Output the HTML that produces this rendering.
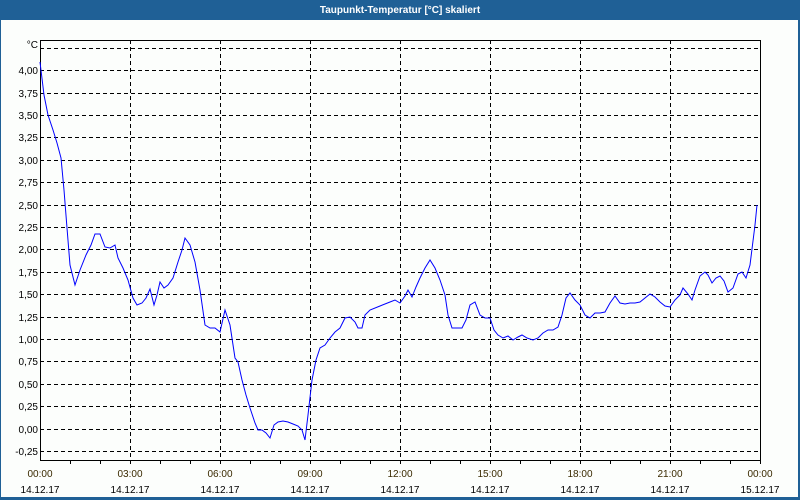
<!DOCTYPE html>
<html><head><meta charset="utf-8"><style>
html,body{margin:0;padding:0;width:800px;height:500px;overflow:hidden;background:#fcfefc}
</style></head><body>
<svg width="800" height="500" xmlns="http://www.w3.org/2000/svg" font-family="Liberation Sans, sans-serif" font-size="10">
<rect x="0" y="0" width="800" height="500" fill="#1f6096"/>
<rect x="1" y="20" width="797" height="477" fill="#fcfefc"/>
<text x="400" y="13" text-anchor="middle" fill="#fff" font-weight="bold" font-size="10">Taupunkt-Temperatur [°C] skaliert</text>
<g stroke="#000" stroke-width="1" stroke-dasharray="4,3" fill="none">
<path d="M40 48.5H760M40 70.5H760M40 93.5H760M40 115.5H760M40 137.5H760M40 160.5H760M40 182.5H760M40 205.5H760M40 227.5H760M40 249.5H760M40 272.5H760M40 294.5H760M40 317.5H760M40 339.5H760M40 361.5H760M40 384.5H760M40 406.5H760M40 429.5H760M40 451.5H760"/>
<path d="M130.5 40V460M220.5 40V460M310.5 40V460M400.5 40V460M490.5 40V460M580.5 40V460M670.5 40V460"/>
</g>
<rect x="40.5" y="40.5" width="720" height="420" fill="none" stroke="#000"/>
<g stroke="#000"><path d="M70.5 460v4M100.5 460v4M130.5 460v4M160.5 460v4M190.5 460v4M220.5 460v4M250.5 460v4M280.5 460v4M310.5 460v4M340.5 460v4M370.5 460v4M400.5 460v4M430.5 460v4M460.5 460v4M490.5 460v4M520.5 460v4M550.5 460v4M580.5 460v4M610.5 460v4M640.5 460v4M670.5 460v4M700.5 460v4M730.5 460v4M760.5 460v4"/></g>
<g text-anchor="end" fill="#000">
<text x="38" y="48">°C</text>
<text x="38" y="74">4,00</text><text x="38" y="97">3,75</text><text x="38" y="119">3,50</text><text x="38" y="141">3,25</text><text x="38" y="164">3,00</text><text x="38" y="186">2,75</text><text x="38" y="209">2,50</text><text x="38" y="231">2,25</text><text x="38" y="253">2,00</text><text x="38" y="276">1,75</text><text x="38" y="298">1,50</text><text x="38" y="321">1,25</text><text x="38" y="343">1,00</text><text x="38" y="365">0,75</text><text x="38" y="388">0,50</text><text x="38" y="410">0,25</text><text x="38" y="433">0,00</text><text x="38" y="455">-0,25</text>
</g>
<g text-anchor="middle">
<g fill="#3a2a00">
<text x="40" y="477">00:00</text><text x="130" y="477">03:00</text><text x="220" y="477">06:00</text><text x="310" y="477">09:00</text><text x="400" y="477">12:00</text><text x="490" y="477">15:00</text><text x="580" y="477">18:00</text><text x="670" y="477">21:00</text><text x="760" y="477">00:00</text>
</g>
<g fill="#000">
<text x="40" y="493">14.12.17</text><text x="130" y="493">14.12.17</text><text x="220" y="493">14.12.17</text><text x="310" y="493">14.12.17</text><text x="400" y="493">14.12.17</text><text x="490" y="493">14.12.17</text><text x="580" y="493">14.12.17</text><text x="670" y="493">14.12.17</text><text x="760" y="493">15.12.17</text>
</g>
</g>
<polyline fill="none" stroke="#0000ff" stroke-width="1" points="40,62 44,95 48,115 53,130 57,143 61,158 64,190 67,228 70,265 75,285 80,270 86,255 91,245 95,234 100,234 105,247 110,248 115,245 118,258 123,268 128,280 133,298 137,305 142,303 146,298 150,289 154,305 157,295 160,282 164,288 168,285 173,278 178,262 182,250 185,238 190,245 195,262 200,290 205,325 210,328 215,328 220,332 225,310 230,325 235,358 238,362 242,380 246,395 250,408 255,423 258,430 262,430 266,433 270,438 274,425 278,422 283,421 288,422 293,424 298,426 302,430 305,440 308,415 312,380 316,360 320,348 325,345 330,338 335,332 340,328 345,318 350,317 355,322 358,328 362,328 365,315 370,310 380,306 390,302 395,300 400,303 405,296 408,290 412,297 416,287 420,278 425,268 430,260 435,268 440,280 445,295 448,315 452,328 457,328 462,328 466,320 470,305 475,302 480,315 485,318 490,318 494,330 498,335 503,338 508,336 513,340 518,337 522,335 527,338 533,340 538,338 543,333 548,330 553,330 558,327 562,315 566,298 570,293 575,300 580,305 585,315 590,318 595,313 600,313 605,312 610,303 615,296 620,303 625,304 630,303 635,303 640,302 645,298 650,294 655,297 660,302 665,306 670,307 675,300 680,295 683,288 688,294 692,300 695,290 700,276 705,272 708,275 712,283 716,278 720,276 724,281 728,292 733,288 738,274 742,272 746,278 750,265 755,225 757,205"/>
</svg>
</body></html>
